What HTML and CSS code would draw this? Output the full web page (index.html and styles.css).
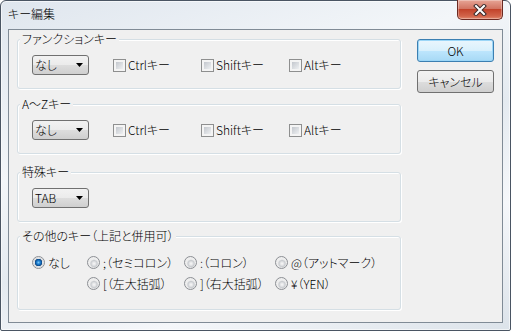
FILE: index.html
```html
<!DOCTYPE html>
<html lang="ja">
<head>
    <meta charset="UTF-8">
    <title>キー編集</title>
    <link rel="stylesheet" href="styles.css">
</head>
<body>
    <div class="window">
        <div class="titlebar">
            <span class="title">キー編集</span>
            <div class="close">
                <svg width="14" height="12" viewBox="0 0 14 12">
                    <path d="M3 2 L11 10 M11 2 L3 10" stroke="#3b2b2b" stroke-width="4" stroke-linecap="square"/>
                    <path d="M3 2 L11 10 M11 2 L3 10" stroke="#ffffff" stroke-width="2" stroke-linecap="square"/>
                </svg>
            </div>
        </div>
        <div class="client">
            <div class="groups">
                <div class="group group-func">
                    <div class="group-title">ファンクションキー</div>
                    <div class="row">
                        <div class="combo"><span>なし</span><svg class="arrow" width="7" height="4" viewBox="0 0 7 4"><path d="M0 0 H7 L3.5 4 Z" fill="#000"/></svg></div>
                        <label class="check"><span class="box"></span>Ctrlキー</label>
                        <label class="check"><span class="box"></span>Shiftキー</label>
                        <label class="check"><span class="box"></span>Altキー</label>
                    </div>
                </div>
                <div class="group group-az">
                    <div class="group-title">A～Zキー</div>
                    <div class="row">
                        <div class="combo"><span>なし</span><svg class="arrow" width="7" height="4" viewBox="0 0 7 4"><path d="M0 0 H7 L3.5 4 Z" fill="#000"/></svg></div>
                        <label class="check"><span class="box"></span>Ctrlキー</label>
                        <label class="check"><span class="box"></span>Shiftキー</label>
                        <label class="check"><span class="box"></span>Altキー</label>
                    </div>
                </div>
                <div class="group group-special">
                    <div class="group-title">特殊キー</div>
                    <div class="row">
                        <div class="combo"><span>TAB</span><svg class="arrow" width="7" height="4" viewBox="0 0 7 4"><path d="M0 0 H7 L3.5 4 Z" fill="#000"/></svg></div>
                    </div>
                </div>
                <div class="group group-other">
                    <div class="group-title">その他のキー（上記と併用可）</div>
                    <div class="radios">
                        <label class="radio-item"><span class="radio checked"></span>なし</label>
                        <label class="radio-item"><span class="radio"></span>;（セミコロン）</label>
                        <label class="radio-item"><span class="radio"></span>:（コロン）</label>
                        <label class="radio-item"><span class="radio"></span>@（アットマーク）</label>
                        <span></span>
                        <label class="radio-item"><span class="radio"></span>[（左大括弧）</label>
                        <label class="radio-item"><span class="radio"></span>]（右大括弧）</label>
                        <label class="radio-item"><span class="radio"></span>¥（YEN）</label>
                    </div>
                </div>
            </div>
            <div class="buttons">
                <button class="btn btn-default">OK</button>
                <button class="btn">キャンセル</button>
            </div>
        </div>
    </div>
</body>
</html>
```

FILE: styles.css
```css
* {
    box-sizing: border-box;
}

body {
    margin: 0;
    font-family: "Noto Sans CJK JP", "Liberation Sans", sans-serif;
    font-size: 12px;
    font-weight: 300;
    font-feature-settings: "palt";
    color: #000;
    background: #ffffff;
}

.window {
    width: 511px;
    height: 331px;
    border: 1px solid #4a5563;
    border-radius: 6px 6px 2px 2px;
    padding: 0 7px 7px;
    background: linear-gradient(160deg, #dfe6ee 0%, #f3f6f9 35%, #e4eaf0 55%, #f5f7fa 75%, #dce3ea 100%);
    box-shadow: inset 0 0 0 1px rgba(255, 255, 255, 0.6);
    display: flex;
    flex-direction: column;
}

.titlebar {
    height: 28px;
    display: flex;
    align-items: flex-start;
    justify-content: space-between;
}

.title {
    margin-top: 5px;
    line-height: 16px;
}

.close {
    width: 46px;
    height: 20px;
    margin-top: -1px;
    border: 1px solid #6b2a22;
    border-top: none;
    border-radius: 0 0 5px 5px;
    background: linear-gradient(#e7a596, #d27563 45%, #c2432b 50%, #d2644a 85%, #e28a70);
    box-shadow: inset 0 0 0 1px rgba(255, 255, 255, 0.3);
    display: flex;
    align-items: center;
    justify-content: center;
}

.client {
    flex: 1;
    border: 1px solid #808b96;
    background: #f0f0f0;
    display: flex;
    gap: 16px;
    padding: 0 8px;
}

.groups {
    width: 384px;
}

.group {
    border: 1px solid #d5dfe5;
    border-radius: 3px;
    box-shadow: inset 1px 1px 0 #ffffff, 1px 1px 0 #ffffff;
    height: 50px;
}

.group-func {
    margin-top: 9px;
}

.group-az {
    margin-top: 15px;
}

.group-special {
    margin-top: 18px;
}

.group-other {
    margin-top: 14px;
    height: 74px;
}

.group-title {
    margin: -8px 0 0 2px;
    padding: 0 2px;
    line-height: 14px;
    background: #f0f0f0;
    width: max-content;
}

.row {
    display: flex;
    align-items: center;
    margin-top: 9px;
    padding-left: 14px;
}

.combo {
    width: 57px;
    height: 20px;
    border: 1px solid #707070;
    border-radius: 3px;
    background: linear-gradient(#f2f2f2, #ebebeb 50%, #dddddd 51%, #cfcfcf);
    display: flex;
    align-items: center;
    justify-content: space-between;
    padding: 0 5px 0 2px;
    line-height: 14px;
}

.check {
    display: flex;
    align-items: center;
    gap: 2px;
    width: 88px;
    line-height: 14px;
}

.combo + .check {
    margin-left: 24px;
}

.box {
    width: 13px;
    height: 13px;
    border: 1px solid #8e8f8f;
    padding: 2px;
    background: linear-gradient(135deg, #c3c7cd, #eef0f2) content-box, #f4f4f4;
}

.radios {
    display: grid;
    grid-template-columns: 55px 97px 91px auto;
    grid-auto-rows: 21px;
    margin-top: 9px;
    padding-left: 14px;
}

.radio-item {
    display: flex;
    align-items: center;
    gap: 3px;
    line-height: 14px;
    white-space: nowrap;
}

.radio {
    width: 13px;
    height: 13px;
    flex: none;
    border-radius: 50%;
    border: 1px solid #8c8f94;
    background: radial-gradient(circle closest-side at 55% 60%, #f8f8f8 0, #e3e4e6 40%, #c8cbcf 70%, #eeeeee 100%);
}

.radio.checked {
    background: radial-gradient(circle closest-side at 50% 50%, #7cc6f4 0, #2184d6 30%, #0b4f93 58%, #0a3f78 64%, #e6e7e9 70%, #d0d3d7 86%, #f4f4f4 100%);
}

.buttons {
    width: 77px;
    display: flex;
    flex-direction: column;
    gap: 8px;
    padding-top: 9px;
}

.btn {
    height: 23px;
    border: 1px solid #707070;
    border-radius: 3px;
    background: linear-gradient(#f2f2f2, #ebebeb 50%, #dddddd 51%, #cfcfcf);
    font: inherit;
    line-height: 14px;
    padding: 0;
    color: #000;
}

.btn-default {
    border-color: #3c7fb1;
    background: linear-gradient(#eaf6fd, #d9f0fc 50%, #bee6fd 51%, #a7d9f5);
    box-shadow: inset 0 0 0 1px #9bd6f7;
}
```
